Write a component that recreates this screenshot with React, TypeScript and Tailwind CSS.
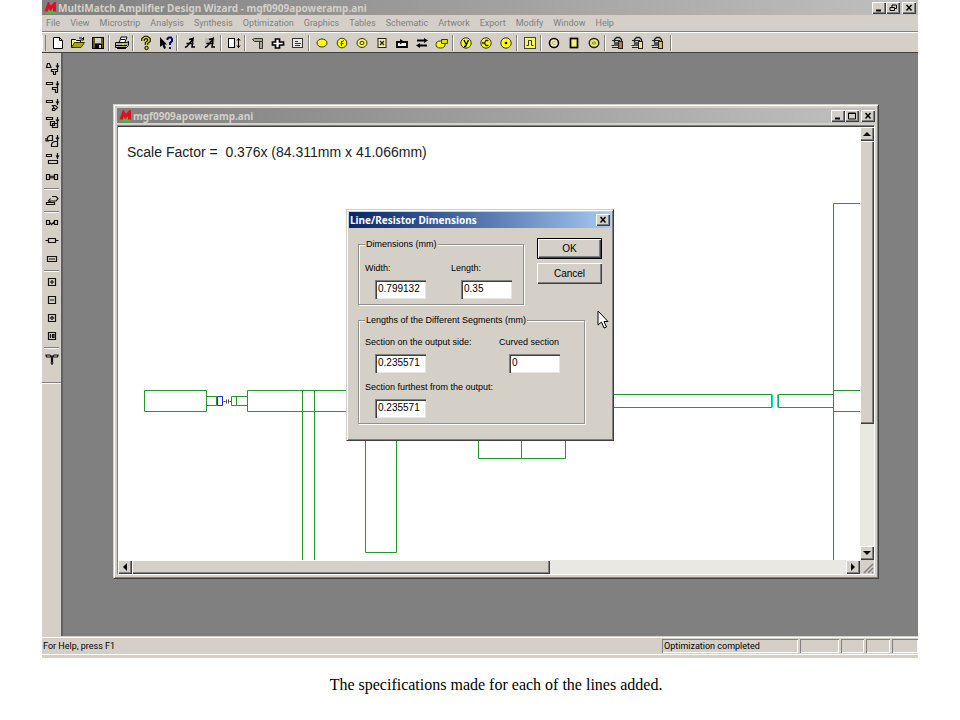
import type { ReactNode } from "react"

const RAISED = "bg-[#d4d0c8] shadow-[inset_1px_1px_0_#fff,inset_-1px_-1px_0_#404040,inset_-2px_-2px_0_#808080]"
const SUNKEN = "shadow-[inset_1px_1px_0_#808080,inset_-1px_-1px_0_#fff]"

const menus = [
  "File", "View", "Microstrip", "Analysis", "Synthesis", "Optimization", "Graphics",
  "Tables", "Schematic", "Artwork", "Export", "Modify", "Window", "Help",
]

interface Tool {
  name: string
  art: ReactNode
}

const Y = "#ffff00"

const lockArt = (fill: string) => (
  <>
    <path d="M4.500 8V4.500l2-2h3l2 2V7" stroke="#222" strokeWidth="1.400" fill="none" />
    <path d="M2 5.500h8M2 12.500h6M1.500 10.500h5" stroke="#222" />
    <rect x="4" y="7" width="5" height="4" fill="#555" />
    <rect x="8.500" y="6.500" width="4" height="7" fill={fill} stroke="#222" />
  </>
)

const toolGroups: Tool[][] = [
  [
    { name: "New", art: <path d="M3.500 2.500h6l3 3v8h-9zM9.500 2.500v3h3" fill="#fff" stroke="#000" /> },
    {
      name: "Open",
      art: (
        <>
          <path d="M1.500 12.500v-8h4l1 1h4v2" fill="#ffff80" stroke="#000" />
          <path d="M1.500 12.500l3-5h10l-3.500 5z" fill="#a8a800" stroke="#333300" />
          <path d="M9 3h3l1.500 1.500M13.500 2v3h-3" fill="none" stroke="#000" />
        </>
      ),
    },
    {
      name: "Save",
      art: (
        <>
          <rect x="2.500" y="2.500" width="11" height="11" fill="#606000" stroke="#000" />
          <rect x="5" y="3" width="6" height="5" fill="#d4d0c8" />
          <rect x="5" y="9" width="7" height="5" fill="#000" />
          <rect x="9" y="10" width="2" height="3" fill="#d4d0c8" />
        </>
      ),
    },
  ],
  [
    {
      name: "Print",
      art: (
        <>
          <path d="M5.500 7l1.500-5h6l-2 5" fill="#fff" stroke="#000" />
          <path d="M1.500 7.500h11l2-1v4l-2 2h-11z" fill="#b0b0a8" stroke="#000" />
          <path d="M3 13.500h9M2 10.500h11M7 4.500h4" stroke="#000" />
          <rect x="8" y="9" width="2" height="1" fill={Y} />
        </>
      ),
    },
  ],
  [
    {
      name: "Help",
      art: (
        <>
          <path d="M5 6V4l2-1.500h2L11 4v2L8.500 8v2" stroke="#000" strokeWidth="3.500" fill="none" />
          <path d="M5 6V4l2-1.500h2L11 4v2L8.500 8v2" stroke="#d8d800" strokeWidth="1.500" fill="none" />
          <circle cx="8.500" cy="13" r="1.700" fill="#d8d800" stroke="#000" />
        </>
      ),
    },
    {
      name: "Context help",
      art: (
        <>
          <path d="M2 2v10l2.500-2 1.500 4 2-1-1.500-3.500H9z" fill="#000" />
          <path d="M9.500 5V3.500l1.500-1h2l1 1.500v2l-2 2v2M12 12v2" stroke="#000080" strokeWidth="2" fill="none" />
        </>
      ),
    },
  ],
  [
    { name: "Analyze", art: <path d="M3 12.500l2-1 6-7.500-1 8h3M4.500 8.500h7M7 4.500l4-1" stroke="#000" strokeWidth="1.500" fill="none" /> },
    {
      name: "Analyze all",
      art: (
        <>
          <rect x="3" y="3" width="10" height="6" fill="#bcb8b0" />
          <path d="M3 12.500l2-1 6-7.500-1 8h3M4.500 8.500h7M7 4.500l4-1" stroke="#000" strokeWidth="1.500" fill="none" />
        </>
      ),
    },
  ],
  [
    {
      name: "Resize",
      art: (
        <>
          <rect x="2.500" y="3.500" width="6" height="9" fill="#fff" stroke="#000" />
          <path d="M12.500 3v10M11 5.500l1.500-2 1.500 2M11 10.500l1.500 2 1.500-2" stroke="#000" fill="none" />
        </>
      ),
    },
  ],
  [
    { name: "Line", art: <path d="M2.500 4.500l2-1h8v3h-8zM9.500 6.500h3v7h-3z" fill="#a8a890" stroke="#333" /> },
    { name: "Cross", art: <path d="M5.500 4h4v3h4v3h-4v3h-4v-3h-3V7h3z" fill="#fff" stroke="#000" strokeWidth="1.700" /> },
    {
      name: "Notes",
      art: (
        <>
          <rect x="2.500" y="3.500" width="10" height="9" fill="#e8e6e0" stroke="#333" />
          <path d="M5 6.500h3M5 8.500h6M5 10.500h5" stroke="#333" />
        </>
      ),
    },
  ],
  [
    { name: "Circle", art: <ellipse cx="8" cy="8" rx="5" ry="4" fill={Y} stroke="#333" /> },
    {
      name: "Reflection",
      art: (
        <>
          <circle cx="8" cy="8" r="4.800" fill={Y} stroke="#333" />
          <path d="M7.500 11V6M7.500 7l2.500-1.500M6.500 8.500h3" stroke="#333" fill="none" />
        </>
      ),
    },
    {
      name: "Stability",
      art: (
        <>
          <ellipse cx="8" cy="8" rx="5" ry="4.500" fill="#f4f060" stroke="#333" />
          <ellipse cx="8" cy="8" rx="2" ry="1.700" fill={Y} stroke="#333" />
        </>
      ),
    },
    {
      name: "Matrix",
      art: (
        <>
          <rect x="4" y="3.500" width="8" height="9" fill="#f4f0a0" stroke="#222" />
          <path d="M6 6l4 4M10 6l-4 4" stroke="#222" strokeWidth="1.300" />
        </>
      ),
    },
    {
      name: "Feedback",
      art: (
        <>
          <path d="M3 7h10v5H3z" stroke="#000" strokeWidth="1.800" fill="#f4f2ec" />
          <path d="M6 4l4 2.500-4 3z" fill="#000" />
        </>
      ),
    },
    {
      name: "Swap",
      art: (
        <>
          <path d="M3 5.500h8M5 10.500h8" stroke="#000" strokeWidth="2" />
          <path d="M10 3l4 2.500L10 8zM6 8l-4 2.500L6 13z" fill="#000" />
        </>
      ),
    },
    {
      name: "Overlay",
      art: (
        <>
          <ellipse cx="6.500" cy="9.500" rx="4.500" ry="3.500" fill={Y} stroke="#333" />
          <path d="M7.500 4.500h6v4h-6z" fill="#e0e000" stroke="#333" />
        </>
      ),
    },
  ],
  [
    {
      name: "Admittance",
      art: (
        <>
          <circle cx="8" cy="8" r="5.200" fill={Y} stroke="#333" />
          <path d="M6 5l2 4M10.500 5L7.500 11.500H6" stroke="#000" strokeWidth="1.400" fill="none" />
        </>
      ),
    },
    {
      name: "Constellation",
      art: (
        <>
          <circle cx="8" cy="8" r="5.200" fill={Y} stroke="#333" />
          <path d="M4 8h3M10.500 5.500H8L6.500 8 8 10.500h2.500" stroke="#222" strokeWidth="1.300" fill="none" />
        </>
      ),
    },
    {
      name: "Center point",
      art: (
        <>
          <circle cx="8" cy="8" r="5.200" fill={Y} stroke="#333" />
          <circle cx="8" cy="8" r="1.300" fill="#000" />
        </>
      ),
    },
  ],
  [
    {
      name: "Pulse",
      art: (
        <>
          <rect x="2.500" y="2.500" width="11" height="11" fill="#f8f460" stroke="#444" />
          <path d="M4.500 10.500h2v-5h3v5h2" stroke="#333" fill="none" />
        </>
      ),
    },
  ],
  [
    {
      name: "Ring",
      art: (
        <>
          <circle cx="8" cy="8" r="4.500" fill="#f0ecb0" stroke="#000" strokeWidth="1.600" />
          <path d="M9.500 6.500h-2l-1 1.500 1 1.500h2" stroke="#aaa" fill="none" />
        </>
      ),
    },
    { name: "Block", art: <rect x="4.500" y="3.500" width="7" height="9" fill="#f4f080" stroke="#000" strokeWidth="1.700" /> },
    {
      name: "Target",
      art: (
        <>
          <ellipse cx="8" cy="8" rx="4.800" ry="4.500" fill="#f0ec50" stroke="#222" strokeWidth="1.400" />
          <ellipse cx="8" cy="8" rx="2" ry="1" fill="#ffffa0" stroke="#777" />
        </>
      ),
    },
  ],
  [
    { name: "Lock red", art: lockArt("#d07020") },
    { name: "Lock yellow", art: lockArt("#e8e870") },
    { name: "Lock olive", art: lockArt("#c8c840") },
  ],
]

const DOWN = "M13.500 2v6M12 4.500l1.500 2 1.500-2"

const sideGroups: Tool[][] = [
  [
    { name: "Taper", art: <path d={"M2.500 6.500l1-4h2l1.500 4zM7.500 8.500h6v2h-2v3h-2v-3h-2z" + DOWN} /> },
    { name: "Bend", art: <path d={"M2.500 3.500h6v2h-6zM8.500 8.500h5v5h-2v-3h-3z" + DOWN} /> },
    { name: "Mitred bend", art: <path d={"M2.500 3.500h6v2h-6zM8.500 8.500h3l2 2-3 3h-2v-2h2z" + DOWN} /> },
    { name: "Step", art: <path d={"M2.500 2.500h6v2h-6zM6.500 6.500h4v4h-4zM8.500 8.500h5v4h-5z" + DOWN} /> },
    { name: "Junction", art: <path d={"M3.500 4.500l2-2h3v5h-5zM8.500 9.500l2-1h3v5h-6v-2zM2 5v3h3" + DOWN} /> },
    { name: "Stub", art: <path d={"M2.500 3.500h5v2h-5zM4.500 9.500h9v3h-9z" + DOWN} /> },
    { name: "Gap", art: <path d="M2.500 5.500h3v5h-3zM10.500 5.500h3v5h-3zM5 8h6M7 6.500v3M9 6.500v3" /> },
  ],
  [{ name: "Undo", art: <path d="M2.500 10.500h8v2h-8zM8 4.500h4l2 2-2 2.500H6M6.500 6.500l-2 2.500 2 1.500" /> }],
  [
    { name: "Coupled", art: <path d="M2.500 5.500h3v4h-3zM10.500 5.500h3v4h-3zM5.500 7l2 2.500 3-3" /> },
    { name: "Series", art: <path d="M4.500 5.500h7v4h-7zM1.500 7.500h3M12 7.500h2.500" /> },
    { name: "Resistor", art: <path d="M3.500 5.500h9v5h-9zM5 8h6" /> },
  ],
  [
    { name: "Zoom in", art: <path d="M4.500 4.500h7v7h-7zM6 8h4M8 6v4" /> },
    { name: "Zoom out", art: <path d="M4.500 4.500h7v7h-7zM6 8h4" /> },
    { name: "Zoom fit", art: <path d="M4.500 4.500h7v7h-7zM8 6.500L9.500 8 8 9.500 6.500 8z" /> },
    { name: "Zoom window", art: <path d="M4.500 4.500h7v7h-7zM6.500 6v4M8.500 6.500h1.500v3H8.500z" /> },
  ],
  [{ name: "Tee", art: <path d="M2 4h4l1 1.500-1 .5H2.500zM10 4h4l-.5 2H10L9 5.500zM7.500 6.500h1v4h-1zM8 10v4M6.500 12h3M6 5h4" /> }],
]

function Logo() {
  return (
    <svg width="13" height="12" viewBox="0 0 13 12">
      <path d="M1 11.500C4 7 9 7 13 11.500z" fill="#40c040" />
      <path d="M2 9.500L4.500 2.500l2 4 4-4.500v7.500" stroke="#e01020" strokeWidth="3" fill="none" />
    </svg>
  )
}

function WindowButton({ kind }: { kind: "Minimize" | "Restore" | "Maximize" | "Close" }) {
  return (
    <button aria-label={kind} className={`flex h-3 w-[14px] items-center justify-center ${RAISED}`}>
      <svg width="9" height="8" viewBox="0 0 9 8" fill="none" stroke="#000">
        {kind === "Minimize" && <path d="M1 6.500h5" strokeWidth="2" />}
        {kind === "Maximize" && <path d="M.5 1h7v6h-7zM.5 1.500h7" />}
        {kind === "Restore" && <path d="M3 3V1h4.500v3.500H6M1 3.500h4.500v3H1z" />}
        {kind === "Close" && <path d="M1.500 1l5 5.500M6.500 1l-5 5.500" strokeWidth="1.500" />}
      </svg>
    </button>
  )
}

function WindowButtons({ middle }: { middle: "Restore" | "Maximize" }) {
  return (
    <div className="ml-auto flex">
      <WindowButton kind="Minimize" />
      <WindowButton kind={middle} />
      <span className="w-0.5" />
      <WindowButton kind="Close" />
    </div>
  )
}

function Arrow({ name, path }: { name: string; path: string }) {
  return (
    <button aria-label={name} className={`flex h-[14px] w-[14px] shrink-0 items-center justify-center ${RAISED}`}>
      <svg width="8" height="8" viewBox="0 0 8 8">
        <path d={path} fill="#000" />
      </svg>
    </button>
  )
}

function Toolbar() {
  return (
    <div className="flex h-5 items-center border-t border-white bg-[#d4d0c8]">
      <div className="mr-0.5 h-4 w-1 border-x border-l-white border-r-[#808080]" />
      {toolGroups.map((group, i) => (
        <div key={i} className="flex items-center">
          {i > 0 && <span className="mr-0.5 h-4 w-0.5 border-l border-[#808080] bg-white" />}
          {group.map((t) => (
            <button key={t.name} aria-label={t.name} className="flex h-[18px] w-5 items-center justify-center">
              <svg width="16" height="16" viewBox="0 0 16 16">{t.art}</svg>
            </button>
          ))}
        </div>
      ))}
      <span className="ml-0.5 h-4 w-0.5 border-l border-[#808080] bg-white" />
    </div>
  )
}

function SideBar() {
  return (
    <div className="w-[21px] shrink-0 border-r-2 border-[#606060] bg-[#d4d0c8] pt-[7px]">
      {sideGroups.map((group, i) => (
        <div key={i}>
          {i > 0 && (
            <div className="h-[5px] pt-0.5">
              <div className="mx-0.5 h-0.5 border-t border-[#808080] bg-white" />
            </div>
          )}
          {group.map((t) => (
            <button key={t.name} aria-label={t.name} className="flex h-[18px] w-full items-center justify-center">
              <svg width="16" height="16" viewBox="0 0 16 16" fill="none" stroke="#111" strokeWidth="1.200">{t.art}</svg>
            </button>
          ))}
        </div>
      ))}
      <div className="mt-3.5 h-0.5 border-t border-[#808080] bg-white" />
    </div>
  )
}

function Artwork() {
  return (
    <svg className="absolute inset-0 h-full w-full" fill="none" stroke="#22992c">
      <g transform="translate(-117.5 -126.500)">
        <path d="M144 390h62v21h-62zM206 396h10v9h-10" />
        <path d="M217 396h5v9h-5z" stroke="#2020ff" />
        <path d="M223 401h2M226 399v4M228 399v4M229 401h2" stroke="#444" />
        <path d="M231 396h16M231 405h16M231 396v9M236 396v9" />
        <path d="M347 390H247v21h100M302 390v171M314 390v171" />
        <path d="M365 430v122h31V430M478 430v28h87v-28M521 430v28" />
        <path d="M600 394h171v13H600M778 394h55M778 407h55" />
        <path d="M772 394v13M777 394v13" stroke="#00e0e0" />
        <path d="M771 394v13M778 394v13" stroke="#10b070" />
        <path d="M862 203h-29v358M833 390h29M833 411h29" />
      </g>
    </svg>
  )
}

function ArtworkWindow() {
  return (
    <div className="border border-[#d4d0c8] border-r-[#404040] border-b-[#404040] bg-[#d4d0c8] p-[3px] shadow-[inset_1px_1px_0_#fff,inset_-1px_-1px_0_#808080]">
      <div className="flex h-[15px] items-center bg-linear-to-r from-[#808080] to-[#c0c0c0] pl-0.5">
        <Logo />
        <span className="ml-px text-[10px] leading-3 font-bold whitespace-nowrap text-[#d4d0c8]">mgf0909apoweramp.ani</span>
        <WindowButtons middle="Maximize" />
      </div>
      <div className="mt-0.5 border border-[#808080] border-r-white border-b-white pt-px shadow-[inset_0_1px_0_#404040]">
        <div className="flex">
          <div className="relative h-[433px] min-w-0 flex-1 overflow-hidden bg-white">
            <Artwork />
            <p className="relative pt-[17px] pl-[9px] font-['Liberation_Sans'] text-[14px] leading-4 whitespace-pre text-[#222]">
              Scale Factor =  0.376x (84.311mm x 41.066mm)
            </p>
          </div>
          <div className="flex w-[14px] flex-col bg-[#e9e8e3]">
            <Arrow name="Scroll up" path="M0 6l4-4 4 4z" />
            <div className={`h-[283px] ${RAISED}`} />
            <div className="flex-1" />
            <Arrow name="Scroll down" path="M0 2h8L4 6z" />
          </div>
        </div>
        <div className="flex h-[14px] bg-[#e9e8e3]">
          <Arrow name="Scroll left" path="M6 0v8L2 4z" />
          <div className={`w-[418px] ${RAISED}`} />
          <div className="flex-1" />
          <Arrow name="Scroll right" path="M2 0v8l4-4z" />
          <svg width="14" height="14" viewBox="0 0 14 14" className="bg-[#d4d0c8]">
            <path d="M4 13l9-9M8 13l5-5M12 13l1-1" stroke="#808080" strokeWidth="1.500" />
          </svg>
        </div>
      </div>
    </div>
  )
}

interface FieldProps {
  id: string
  label: string
  value: string
}

function Field({ id, label, value }: FieldProps) {
  return (
    <div>
      <label htmlFor={id} className="block whitespace-nowrap">{label}</label>
      <input
        id={id}
        defaultValue={value}
        className="mt-1.5 ml-2.5 block h-[19px] w-[51px] bg-white px-[3px] pb-0.5 text-[10px] shadow-[inset_1px_1px_0_#808080,inset_2px_2px_0_#404040,inset_-1px_-1px_0_#e8e6e0]"
      />
    </div>
  )
}

function Group({ title, className, children }: { title: string; className: string; children: ReactNode }) {
  return (
    <fieldset className={`border border-[#909088] px-1.5 pb-[5px] shadow-[1px_1px_0_#fff,inset_1px_1px_0_#fff] ${className}`}>
      <legend className="bg-[#d4d0c8] px-px">{title}</legend>
      {children}
    </fieldset>
  )
}

function DimensionsDialog() {
  return (
    <div
      role="dialog"
      aria-label="Line/Resistor Dimensions"
      className="absolute top-[156px] left-[283px] w-[268px] border border-[#d4d0c8] border-r-[#404040] border-b-[#404040] bg-[#d4d0c8] p-0.5 pb-4 font-['Liberation_Sans'] text-[9px] leading-3 text-black shadow-[inset_1px_1px_0_#fff,inset_-1px_-1px_0_#808080]"
    >
      <div className="flex h-4 items-center bg-linear-to-r from-[#0a246a] to-[#a6caf0] pr-px pl-px">
        <span className="flex-1 font-['Noto_Sans'] text-[10px] font-bold text-white">Line/Resistor Dimensions</span>
        <WindowButton kind="Close" />
      </div>
      <div className="space-y-[9px] pt-[10px] pl-[9px]">
        <div className="flex gap-[13px]">
          <Group title="Dimensions (mm)" className="w-[166px]">
            <div className="grid grid-cols-[86px_auto] pt-3">
              <Field id="width" label="Width:" value="0.799132" />
              <Field id="length" label="Length:" value="0.35" />
            </div>
          </Group>
          <div className="flex w-[65px] flex-col gap-1 text-[10px]">
            <button className={`h-[21px] border border-black ${RAISED}`}>OK</button>
            <button className={`h-[21px] ${RAISED}`}>Cancel</button>
          </div>
        </div>
        <Group title="Lengths of the Different Segments (mm)" className="w-[227px]">
          <div className="grid grid-cols-[134px_auto] gap-y-2 pt-2.5">
            <Field id="output-side" label="Section on the output side:" value="0.235571" />
            <Field id="curved" label="Curved section" value="0" />
            <Field id="furthest" label="Section furthest from the output:" value="0.235571" />
          </div>
        </Group>
      </div>
      <svg className="absolute top-[100px] left-[250px]" width="12" height="20" viewBox="0 0 12 20">
        <path d="M1 1v14l3.500-3 2.500 6 2.500-1-2.500-5.500H11z" fill="#fff" stroke="#000" />
      </svg>
    </div>
  )
}

function StatusBar() {
  return (
    <div className="h-[22px] border-t border-[#d4d0c8] bg-[#d4d0c8] font-[Roboto] text-[9px] leading-[14px] text-black">
      <div className="flex h-[18px] items-center gap-0.5 border-y border-white">
        <span className="flex-1 pl-px">For Help, press F1</span>
        <span className={`h-[14px] w-[136px] pl-0.5 whitespace-nowrap ${SUNKEN}`}>Optimization completed</span>
        <span className={`h-[14px] w-[39px] ${SUNKEN}`} />
        <span className={`h-[14px] w-[23px] ${SUNKEN}`} />
        <span className={`h-[14px] w-[24px] ${SUNKEN}`} />
        <span className={`h-[14px] w-[26px] ${SUNKEN}`} />
      </div>
    </div>
  )
}

export default function App() {
  return (
    <main className="min-h-screen bg-white px-[42px] font-['Noto_Sans',sans-serif]">
      <div>
        <div className="flex h-[15px] items-center bg-linear-to-r from-[#808080] to-[#c0c0c0] pr-0.5 pl-0.5">
          <Logo />
          <h1 className="ml-px text-[10px] leading-3 font-bold whitespace-nowrap text-[#d4d0c8]">
            MultiMatch Amplifier Design Wizard - mgf0909apoweramp.ani
          </h1>
          <WindowButtons middle="Restore" />
        </div>
        <nav className="flex h-[17px] items-center gap-2.5 border-b border-[#808080] bg-[#d4d0c8] pl-1 font-[Roboto] text-[9px] leading-3 text-[#808080]">
          {menus.map((m) => (
            <button key={m}>{m}</button>
          ))}
        </nav>
        <Toolbar />
        <div className="flex border-t border-[#404040]">
          <SideBar />
          <div className="relative min-w-0 flex-1 bg-[#808080] pt-[51px] pr-[39px] pb-[57px] pl-[50px]">
            <ArtworkWindow />
            <DimensionsDialog />
          </div>
        </div>
        <StatusBar />
      </div>
      <p className="pt-[17px] pl-8 text-center font-['Liberation_Serif'] text-[16px] leading-5 text-black">
        The specifications made for each of the lines added.
      </p>
    </main>
  )
}
